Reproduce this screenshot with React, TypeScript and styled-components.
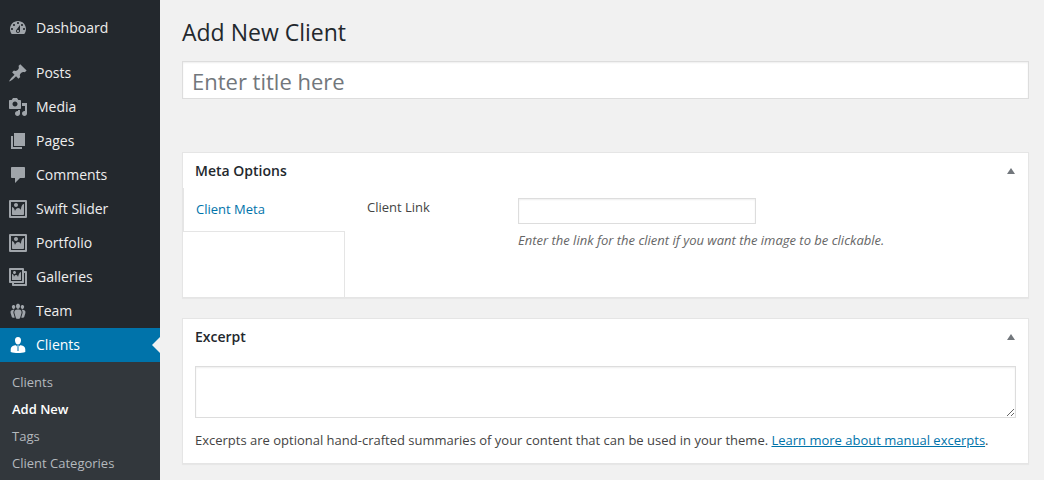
import React from 'react';
import styled, { createGlobalStyle, css } from 'styled-components';

const GlobalStyle = createGlobalStyle`
  *, *::before, *::after { box-sizing: border-box; }
  body {
    margin: 0;
    background: #f1f1f1;
    color: #444;
    font-family: 'Open Sans', 'Liberation Sans', sans-serif;
    font-size: 13px;
    line-height: 18px;
  }
`;

const Shell = styled.div`
  display: flex;
  min-height: 100vh;
`;

const Sidebar = styled.nav`
  flex: 0 0 160px;
  display: flex;
  flex-direction: column;
  padding-top: 11px;
  background: #23282d;
`;

const Menu = styled.ul`
  list-style: none;
  margin: 0;
  padding: 0;
`;

const MenuItem = styled.li<{ $spaced?: boolean }>`
  margin-bottom: ${(p) => (p.$spaced ? 11 : 0)}px;
`;

const MenuLink = styled.a<{ $current?: boolean }>`
  position: relative;
  display: flex;
  align-items: center;
  height: 34px;
  padding-left: 8px;
  gap: 8px;
  color: #eee;
  font-size: 14px;
  text-decoration: none;
  svg { fill: #a0a5aa; }
  ${(p) =>
    p.$current &&
    css`
      background: #0073aa;
      color: #fff;
      svg { fill: #fff; }
      &::after {
        content: '';
        position: absolute;
        right: 0;
        top: 9px;
        border: 8px solid transparent;
        border-left-width: 0;
        border-right-color: #f1f1f1;
      }
    `}
`;

const Submenu = styled.ul`
  flex: 1;
  list-style: none;
  margin: 0;
  padding: 7px 12px 0;
  background: #32373c;
`;

const SubLink = styled.a<{ $current?: boolean }>`
  display: block;
  line-height: 27px;
  color: ${(p) => (p.$current ? '#fff' : '#b4b9be')};
  font-weight: ${(p) => (p.$current ? 600 : 400)};
  text-decoration: none;
`;

const Main = styled.main`
  flex: 1;
  min-width: 0;
  padding: 16px 15px 16px 22px;
`;

const PageTitle = styled.h1`
  margin: 0 0 12px;
  color: #23282d;
  font-size: 23px;
  font-weight: 400;
  line-height: 33px;
`;

const fieldStyle = css`
  display: block;
  margin: 0;
  border: 1px solid #ddd;
  border-radius: 0;
  background: #fff;
  box-shadow: inset 0 1px 2px rgba(0, 0, 0, 0.07);
  color: #32373c;
  font-family: inherit;
`;

const TitleInput = styled.input`
  ${fieldStyle}
  width: 100%;
  height: 38px;
  margin-bottom: 53px;
  padding: 2px 9px 0;
  font-size: 22px;
  &::placeholder { color: #72777c; opacity: 1; }
`;

const Box = styled.section`
  margin-bottom: 20px;
  border: 1px solid #e5e5e5;
  background: #fff;
  box-shadow: 0 1px 1px rgba(0, 0, 0, 0.04);
`;

const BoxHeader = styled.header`
  display: flex;
  align-items: center;
  justify-content: space-between;
  height: 35px;
  padding-left: 12px;
`;

const BoxTitle = styled.h2`
  margin: 0;
  color: #23282d;
  font-size: 14px;
  font-weight: 600;
`;

const Toggle = styled.button`
  display: grid;
  place-items: center;
  width: 35px;
  height: 35px;
  padding: 0;
  border: 0;
  background: none;
  svg { fill: #72777c; }
`;

const MetaBody = styled.div`
  display: flex;
  min-height: 109px;
`;

const Tabs = styled.div`
  flex: 0 0 162px;
  display: flex;
  flex-direction: column;
`;

const Tab = styled.a`
  height: 43px;
  padding: 0 12px;
  border-left: 1px solid #e5e5e5;
  line-height: 43px;
  color: #0073aa;
  text-decoration: none;
`;

const TabFill = styled.div`
  flex: 1;
  border: solid #e5e5e5;
  border-width: 1px 1px 0 0;
`;

const Field = styled.div`
  flex: 1;
  display: grid;
  grid-template-columns: 151px 1fr;
  align-content: start;
  padding: 10px 12px 10px 22px;
`;

const LinkInput = styled.input`
  ${fieldStyle}
  width: 238px;
  height: 26px;
  margin-bottom: 7px;
  padding: 3px 5px;
  font-size: 13px;
`;

const Hint = styled.em`
  color: #666;
`;

const ExcerptBody = styled.div`
  padding: 12px 12px 14px;
`;

const ExcerptInput = styled.textarea`
  ${fieldStyle}
  width: 100%;
  height: 52px;
  margin-bottom: 13px;
  padding: 2px 6px;
  font-size: 13px;
  resize: vertical;
`;

const Note = styled.p`
  margin: 0;
  a { color: #0073aa; }
`;

const paths = {
  dashboard:
    'M3.76 16h12.48c1.1-1.37 1.76-3.11 1.76-5 0-4.42-3.58-8-8-8s-8 3.58-8 8c0 1.89.66 3.63 1.76 5zM10 4c.55 0 1 .45 1 1s-.45 1-1 1-1-.45-1-1 .45-1 1-1zM6 6c.55 0 1 .45 1 1s-.45 1-1 1-1-.45-1-1 .45-1 1-1zm8 0c.55 0 1 .45 1 1s-.45 1-1 1-1-.45-1-1 .45-1 1-1zm-5.37 5.55L12 7v6c0 1.1-.9 2-2 2s-2-.9-2-2c0-.57.24-1.08.63-1.45zM4 10c.55 0 1 .45 1 1s-.45 1-1 1-1-.45-1-1 .45-1 1-1zm12 0c.55 0 1 .45 1 1s-.45 1-1 1-1-.45-1-1 .45-1 1-1zm-5 3c0-.55-.45-1-1-1s-1 .45-1 1 .45 1 1 1 1-.45 1-1z',
  pin: 'M10.44 3.02l1.82-1.82 6.36 6.35-1.83 1.82c-1.05-.68-2.48-.57-3.41.36l-.75.75c-.92.93-1.04 2.35-.35 3.41l-1.83 1.82-2.41-2.41-2.8 2.79c-.42.42-3.38 2.71-3.8 2.29s1.86-3.39 2.28-3.81l2.79-2.79L4.1 9.36l1.83-1.82c1.05.69 2.48.57 3.4-.36l.75-.75c.93-.92 1.05-2.35.36-3.41z',
  media:
    'M13 11V4c0-.55-.45-1-1-1h-1.67L9 1H5L3.67 3H2c-.55 0-1 .45-1 1v7c0 .55.45 1 1 1h10c.55 0 1-.45 1-1zM7 4.5c1.38 0 2.5 1.12 2.5 2.5S8.38 9.5 7 9.5 4.5 8.38 4.5 7 5.62 4.5 7 4.5zM14 6h5v10.5c0 1.38-1.12 2.5-2.5 2.5S14 17.88 14 16.5s1.12-2.5 2.5-2.5c.17 0 .34.02.5.05V9h-3V6zm-4 8.05V13h2v3.5c0 1.38-1.12 2.5-2.5 2.5S7 17.88 7 16.5 8.12 14 9.5 14c.17 0 .34.02.5.05z',
  page: 'M6 15V2h11v13H6zm-1 1h9v2H3V5h2v11z',
  comment:
    'M4 2h12c.55 0 1 .45 1 1v9c0 .55-.45 1-1 1h-4l-5 5v-5H4c-.55 0-1-.45-1-1V3c0-.55.45-1 1-1z',
  image:
    'M2.25 1h15.5c.69 0 1.25.56 1.25 1.25v15.5c0 .69-.56 1.25-1.25 1.25H2.25C1.56 19 1 18.44 1 17.75V2.25C1 1.56 1.56 1 2.25 1zM17 17V3H3v14h14zM10 6c0-1.1-.9-2-2-2s-2 .9-2 2 .9 2 2 2 2-.9 2-2zm3 5s0-6 3-6v10c0 .55-.45 1-1 1H5c-.55 0-1-.45-1-1V8c2 0 3 4 3 4s1-3 3-3 3 2 3 2z',
  gallery:
    'M16 4h1.96c.57 0 1.04.47 1.04 1.04v12.92c0 .57-.47 1.04-1.04 1.04H5.04C4.47 19 4 18.53 4 17.96V16H2.04C1.47 16 1 15.53 1 14.96V2.04C1 1.47 1.47 1 2.04 1h12.92c.57 0 1.04.47 1.04 1.04V4zM3 14h11V3H3v11zm5-8.5C8 4.67 7.33 4 6.5 4S5 4.67 5 5.5 5.67 7 6.5 7 8 6.33 8 5.5zm2 4.5s1-5 3-5v8H4V7c2 0 2 3 2 3s.33-2 2-2 2 2 2 2zm7 7V6h-1v8.96c0 .57-.47 1.04-1.04 1.04H6v1h11z',
  group:
    'M8.03 4.46c-.29 1.28.55 3.46 1.97 3.46 1.41 0 2.25-2.18 1.96-3.46-.22-.98-1.08-1.63-1.96-1.63-.89 0-1.74.65-1.97 1.63zm-4.13.9c-.25 1.08.47 2.93 1.67 2.93s1.92-1.85 1.67-2.93c-.19-.83-.92-1.39-1.67-1.39s-1.48.56-1.67 1.39zm8.86 0c-.25 1.08.47 2.93 1.66 2.93 1.2 0 1.92-1.85 1.67-2.93-.19-.83-.92-1.39-1.67-1.39-.74 0-1.47.56-1.66 1.39zm-.59 11.43l1.25-4.3C14.2 10 12.71 8.47 10 8.47c-2.72 0-4.21 1.53-3.44 4.02l1.26 4.3C8.05 17.51 9 18 10 18c.98 0 1.94-.49 2.17-1.21zm-6.1-7.63c-.49.67-.96 1.83-.42 3.59l1.12 3.79c-.34.2-.77.31-1.2.31-.85 0-1.65-.41-1.85-1.03l-1.07-3.65c-.65-2.11.61-3.4 2.92-3.4.27 0 .54.02.79.06-.1.1-.2.22-.29.33zm8.35-.39c2.31 0 3.58 1.29 2.92 3.4l-1.07 3.65c-.2.62-1 1.03-1.85 1.03-.43 0-.86-.11-1.2-.31l1.11-3.77c.55-1.78.08-2.94-.42-3.61-.08-.11-.18-.23-.28-.33.25-.04.51-.06.79-.06z',
  businessman:
    'M10 2c2.1 0 3.2 1.5 3 3.7C12.8 7.8 11.6 9.6 10 9.6S7.2 7.8 7 5.700C6.800 3.500 7.900 2 10 2zM8 10.200L9 11.500V16h.5V11.500L9.200 10.600h1.600L10.500 11.500V16H11V11.500L12 10.200c1.300 0 2.600.2 3.300.7 1.400.9 2 2.100 2 3.600v2.400c-2 .8-4.600 1.100-7.300 1.100s-5.300-.3-7.300-1.100v-2.400c0-1.500.6-2.700 2-3.600.7-.5 2-.7 3.300-.7z',
};

type IconName = keyof typeof paths;

const MenuIcon = ({ name }: { name: IconName }) => (
  <svg width="20" height="20" viewBox="0 0 20 20" aria-hidden="true">
    <path d={paths[name]} />
  </svg>
);

const menu: { label: string; icon: IconName; spaced?: boolean; current?: boolean }[] = [
  { label: 'Dashboard', icon: 'dashboard', spaced: true },
  { label: 'Posts', icon: 'pin' },
  { label: 'Media', icon: 'media' },
  { label: 'Pages', icon: 'page' },
  { label: 'Comments', icon: 'comment' },
  { label: 'Swift Slider', icon: 'image' },
  { label: 'Portfolio', icon: 'image' },
  { label: 'Galleries', icon: 'gallery' },
  { label: 'Team', icon: 'group' },
  { label: 'Clients', icon: 'businessman', current: true },
];

const submenu = ['Clients', 'Add New', 'Tags', 'Client Categories'];

const BoxHead = ({ title }: { title: string }) => (
  <BoxHeader>
    <BoxTitle>{title}</BoxTitle>
    <Toggle type="button" aria-label={`Toggle panel: ${title}`}>
      <svg width="8" height="6" viewBox="0 0 8 6" aria-hidden="true">
        <path d="M4 0l4 6H0z" />
      </svg>
    </Toggle>
  </BoxHeader>
);

export default function App() {
  return (
    <Shell>
      <GlobalStyle />
      <Sidebar>
        <Menu>
          {menu.map((item) => (
            <MenuItem key={item.label} $spaced={item.spaced}>
              <MenuLink href="#" $current={item.current}>
                <MenuIcon name={item.icon} />
                {item.label}
              </MenuLink>
            </MenuItem>
          ))}
        </Menu>
        <Submenu>
          {submenu.map((label) => (
            <li key={label}>
              <SubLink href="#" $current={label === 'Add New'}>{label}</SubLink>
            </li>
          ))}
        </Submenu>
      </Sidebar>
      <Main>
        <PageTitle>Add New Client</PageTitle>
        <TitleInput type="text" aria-label="Title" placeholder="Enter title here" />
        <Box>
          <BoxHead title="Meta Options" />
          <MetaBody>
            <Tabs>
              <Tab href="#">Client Meta</Tab>
              <TabFill />
            </Tabs>
            <Field>
              <label htmlFor="client-link">Client Link</label>
              <div>
                <LinkInput id="client-link" type="text" />
                <Hint>Enter the link for the client if you want the image to be clickable.</Hint>
              </div>
            </Field>
          </MetaBody>
        </Box>
        <Box>
          <BoxHead title="Excerpt" />
          <ExcerptBody>
            <ExcerptInput aria-label="Excerpt" />
            <Note>
              Excerpts are optional hand-crafted summaries of your content that can be used in your
              theme. <a href="#">Learn more about manual excerpts</a>.
            </Note>
          </ExcerptBody>
        </Box>
      </Main>
    </Shell>
  );
}
